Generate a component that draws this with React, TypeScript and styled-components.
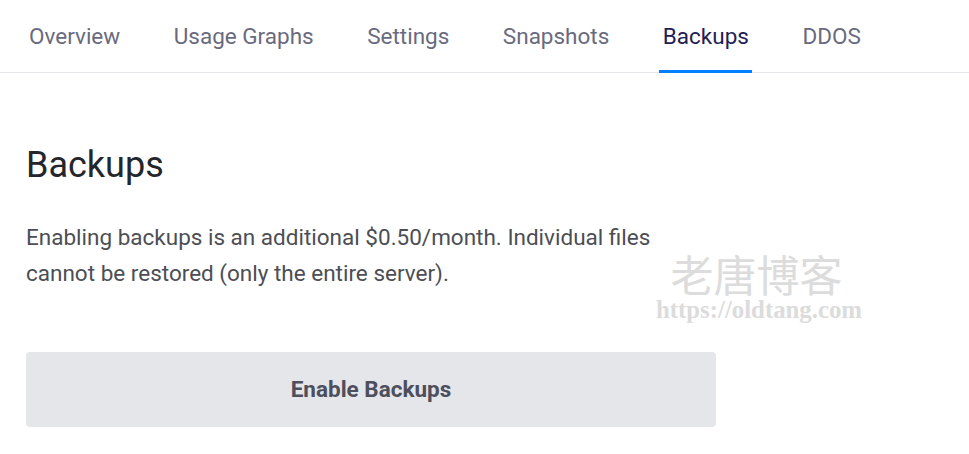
import styled, { createGlobalStyle } from 'styled-components'

const GlobalStyle = createGlobalStyle`
  html, body {
    margin: 0;
    padding: 0;
    background: #fff;
    font-family: Roboto, "Liberation Sans", sans-serif;
  }
`

const Page = styled.div`
  position: relative;
  width: 969px;
  height: 454px;
  overflow: hidden;
`

const TabBar = styled.nav`
  display: flex;
  gap: 46.5px;
  height: 72px;
  padding-left: 25.5px;
  border-bottom: 1px solid #e5e6e9;
`

const Tab = styled.a<{ $active?: boolean }>`
  height: 73px;
  box-sizing: border-box;
  padding: 21px 3.5px 0;
  font-size: 22.5px;
  line-height: 30px;
  color: ${(p) => (p.$active ? '#1f2053' : '#696a7e')};
  border-bottom: 3px solid ${(p) => (p.$active ? '#0080ff' : 'transparent')};
`

const Section = styled.section`
  width: 690px;
  padding: 70px 0 0 26px;
`

const Title = styled.h2`
  margin: 0;
  font-size: 36px;
  font-weight: 400;
  line-height: 44px;
  color: #24262b;
`

const Description = styled.p`
  margin: 32px 0 0;
  font-size: 22.5px;
  line-height: 36px;
  color: #4c4e54;
`

const EnableButton = styled.button`
  display: block;
  width: 100%;
  height: 75px;
  margin-top: 61px;
  padding: 0 0 2px;
  border: 0;
  border-radius: 4px;
  background: #e5e6ea;
  color: #4d4f5c;
  font-family: inherit;
  font-size: 22.5px;
  font-weight: 700;
`

const Watermark = styled.div`
  position: absolute;
  left: 656px;
  top: 249px;
  width: 206px;
  text-align: center;
  color: #dcdcdc;
`

const WatermarkName = styled.div`
  padding-right: 5px;
  font-family: "Noto Sans CJK SC", sans-serif;
  font-size: 43px;
  line-height: 48px;
`

const WatermarkUrl = styled.div`
  margin-top: 3px;
  font-family: "Liberation Serif", serif;
  font-size: 24.8px;
  font-weight: 700;
  line-height: 20px;
  white-space: nowrap;
`

const tabs = ['Overview', 'Usage Graphs', 'Settings', 'Snapshots', 'Backups', 'DDOS']

const App = () => {
  return (
    <Page>
      <GlobalStyle />
      <TabBar>
        {tabs.map((tab) => (
          <Tab key={tab} $active={tab === 'Backups'}>
            {tab}
          </Tab>
        ))}
      </TabBar>
      <Section>
        <Title>Backups</Title>
        <Description>
          Enabling backups is an additional $0.50/month. Individual files
          <br />
          cannot be restored (only the entire server).
        </Description>
        <EnableButton>Enable Backups</EnableButton>
      </Section>
      <Watermark>
        <WatermarkName>老唐博客</WatermarkName>
        <WatermarkUrl>https://oldtang.com</WatermarkUrl>
      </Watermark>
    </Page>
  )
}

export default App
